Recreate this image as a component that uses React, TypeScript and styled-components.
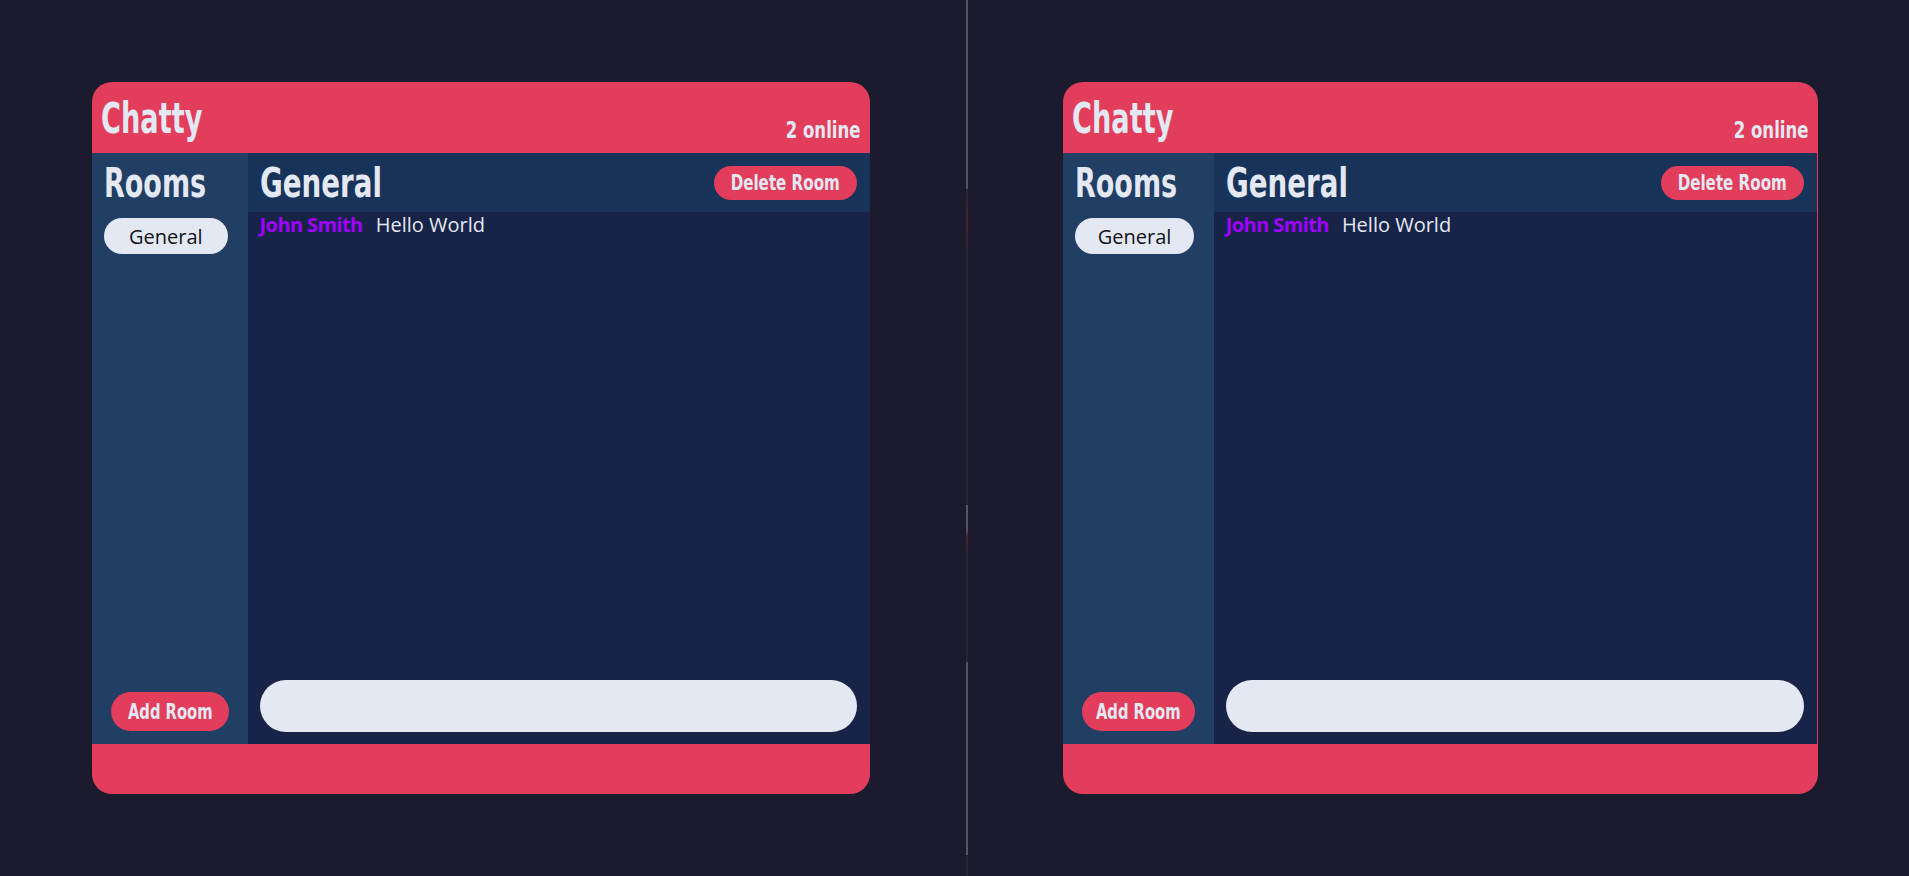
import React from 'react'
import styled, { createGlobalStyle } from 'styled-components'

const GlobalStyle = createGlobalStyle`
  html, body, #root {
    margin: 0;
    height: 100%;
  }
  body {
    background-color: #1b1b2e;
    font-family: "Open Sans", "Noto Sans", sans-serif;
    overflow: hidden;
  }
  * {
    box-sizing: border-box;
  }
`

// no condensed face is installed, so the bold titles are squeezed horizontally
const condensed = `"DejaVu Sans Condensed", "DejaVu Sans", sans-serif`

const Screen = styled.div`
  display: flex;
  height: 876px;
`

const Pane = styled.div<{ $width?: number; $inset: number }>`
  flex: ${p => (p.$width ? `0 0 ${p.$width}px` : '1')};
  display: flex;
  align-items: center;
  padding-left: ${p => p.$inset}px;
`

const Splitter = styled.div`
  flex: 0 0 2px;
  background: linear-gradient(
    to bottom,
    #55555f 0,
    #55555f 189px,
    #26262e 189px,
    #4a2030 222px,
    #26262e 256px,
    #26262e 505px,
    #55555f 505px,
    #55555f 530px,
    #4a2030 536px,
    #26262e 560px,
    #26262e 662px,
    #55555f 662px,
    #55555f 855px,
    #26262e 855px
  );
`

const Card = styled.div<{ $width: number }>`
  width: ${p => p.$width}px;
  height: 712px;
  display: flex;
  flex-direction: column;
  background-color: #e23d5b;
  border-radius: 20px;
  overflow: hidden;
`

const TopBar = styled.header`
  height: 71px;
  flex: 0 0 71px;
  display: flex;
  align-items: flex-end;
  justify-content: space-between;
  padding: 0 10px 10px 9px;
  color: #e4e8f3;
  font-family: ${condensed};
  font-weight: 700;
`

const Logo = styled.h1`
  margin: 0;
  font-size: 42px;
  line-height: 1.15;
  transform: scaleX(0.72);
  transform-origin: left bottom;
`

const Online = styled.span`
  font-size: 23px;
  line-height: 1.15;
  transform: scaleX(0.8);
  transform-origin: right bottom;
`

const Body = styled.div<{ $trim?: boolean }>`
  flex: 1;
  display: flex;
  min-height: 0;
  margin-right: ${p => (p.$trim ? '1px' : '0')};
`

const Sidebar = styled.aside`
  flex: 0 0 20%;
  min-width: 0;
  display: flex;
  flex-direction: column;
  align-items: flex-start;
  padding: 7px 12px 13px;
  background-color: #213e64;
`

const Heading = styled.h2<{ $squeeze: number }>`
  margin: 0;
  font-family: ${condensed};
  font-weight: 700;
  font-size: 40px;
  line-height: 46px;
  color: #e4e8f3;
  white-space: nowrap;
  transform: scaleX(${p => p.$squeeze});
  transform-origin: left center;
`

const RoomPill = styled.button`
  width: 94%;
  height: 36px;
  margin-top: 12px;
  border: none;
  border-radius: 18px;
  background-color: #e4e8f3;
  color: #111320;
  font-family: "Open Sans", sans-serif;
  font-size: 20px;
  padding: 0;
`

const RedButton = styled.button<{ $h: number }>`
  width: 143px;
  height: ${p => p.$h}px;
  border: none;
  border-radius: ${p => p.$h / 2}px;
  background-color: #e23d5b;
  color: #e4e8f3;
  font-family: ${condensed};
  font-weight: 700;
  font-size: 21px;
  padding: 0;
  white-space: nowrap;
  overflow: hidden;
`

const ButtonLabel = styled.span<{ $squeeze: number }>`
  display: inline-block;
  transform: scaleX(${p => p.$squeeze});
`

const AddRoom = styled(RedButton)`
  margin-top: auto;
  width: 89.5%;
  align-self: center;
`

const Main = styled.main`
  flex: 1;
  min-width: 0;
  display: flex;
  flex-direction: column;
  background-color: #172447;
`

const RoomHeader = styled.div`
  height: 59px;
  flex: 0 0 59px;
  display: flex;
  align-items: center;
  justify-content: space-between;
  padding: 0 13px 0 12px;
  background-color: #18335a;
`

const Messages = styled.div`
  flex: 1;
  padding: 0 12px;
`

const Message = styled.div`
  display: flex;
  gap: 13px;
  font-size: 20px;
  line-height: 26px;
  color: #e4e8f3;
`

const Author = styled.span`
  color: #a100ff;
  font-weight: 700;
  letter-spacing: -0.6px;
`

const Composer = styled.div`
  padding: 12px 13px 12px 12px;
`

const Input = styled.input`
  display: block;
  width: 100%;
  height: 52px;
  border: none;
  border-radius: 26px;
  background-color: #e4e8f3;
  outline: none;
  padding: 0 20px;
  font-family: "Open Sans", sans-serif;
  font-size: 18px;
`

const Footer = styled.footer`
  height: 50px;
  flex: 0 0 50px;
`

const ChatWindow = ({ width, trim }: { width: number; trim?: boolean }) => (
  <Card $width={width}>
    <TopBar>
      <Logo>Chatty</Logo>
      <Online>2 online</Online>
    </TopBar>
    <Body $trim={trim}>
      <Sidebar>
        <Heading $squeeze={0.75}>Rooms</Heading>
        <RoomPill>General</RoomPill>
        <AddRoom $h={39}>
          <ButtonLabel $squeeze={0.78}>Add Room</ButtonLabel>
        </AddRoom>
      </Sidebar>
      <Main>
        <RoomHeader>
          <Heading $squeeze={0.77}>General</Heading>
          <RedButton $h={34}>
            <ButtonLabel $squeeze={0.8}>Delete Room</ButtonLabel>
          </RedButton>
        </RoomHeader>
        <Messages>
          <Message>
            <Author>John Smith</Author>
            <span>Hello World</span>
          </Message>
        </Messages>
        <Composer>
          <Input type="text" />
        </Composer>
      </Main>
    </Body>
    <Footer />
  </Card>
)

export default function App() {
  return (
    <>
      <GlobalStyle />
      <Screen>
        <Pane $width={966} $inset={92}>
          <ChatWindow width={778} />
        </Pane>
        <Splitter />
        <Pane $inset={95}>
          <ChatWindow width={755} trim />
        </Pane>
      </Screen>
    </>
  )
}
